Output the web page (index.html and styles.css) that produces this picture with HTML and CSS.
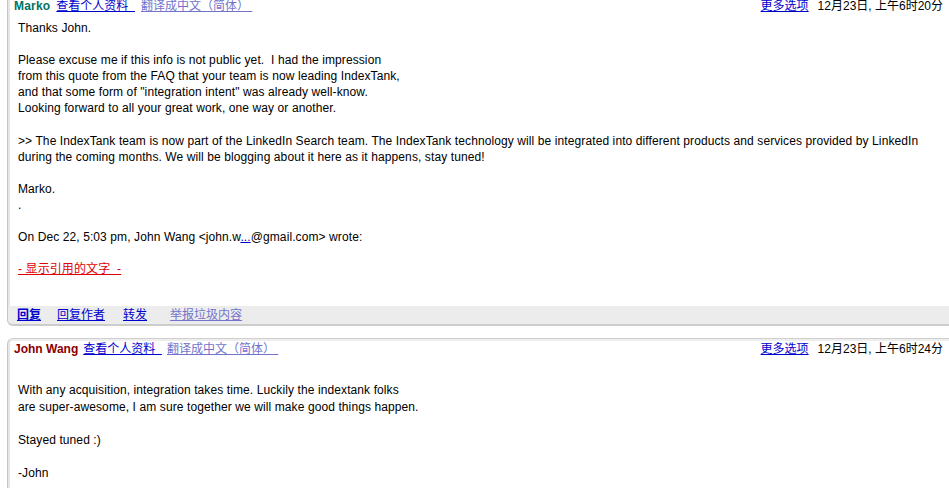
FILE: index.html
```html
<!DOCTYPE html>
<html lang="zh-CN">
<head>
<meta charset="utf-8">
<title>Thread</title>
<link rel="stylesheet" href="styles.css">
</head>
<body>
<div class="thread">
  <div class="msg msg-first">
    <div class="head">
      <div class="head-left">
        <span class="author author-marko">Marko</span>
        <a class="lnk" href="#">查看个人资料&nbsp;&nbsp;</a>
        <a class="lnk lnk-light" href="#">翻译成中文（简体）&nbsp;</a>
      </div>
      <div class="head-right">
        <a class="lnk" href="#">更多选项</a>
        <span class="date">12月23日, 上午6时20分</span>
      </div>
    </div>
    <div class="body body-first">
      Thanks John.<br>
      <br>
      Please excuse me if this info is not public yet.&nbsp; I had the impression<br>
      from this quote from the FAQ that your team is now leading IndexTank,<br>
      and that some form of "integration intent" was already well-know.<br>
      Looking forward to all your great work, one way or another.<br>
      <br>
      &gt;&gt; The IndexTank team is now part of the LinkedIn Search team. The IndexTank technology will be integrated into different products and services provided by LinkedIn<br>
      during the coming months. We will be blogging about it here as it happens, stay tuned!<br>
      <br>
      Marko.<br>
      .<br>
      <br>
      On Dec 22, 5:03 pm, John Wang &lt;john.w<a class="lnk" href="#">...</a>@gmail.com&gt; wrote:<br>
      <br>
      <a class="lnk lnk-red" href="#">- 显示引用的文字&nbsp; -</a>
    </div>
    <div class="foot">
      <a class="lnk lnk-bold" href="#">回复</a>
      <a class="lnk" href="#">回复作者</a>
      <a class="lnk foot-fwd" href="#">转发</a>
      <a class="lnk lnk-light foot-spam" href="#">举报垃圾内容</a>
    </div>
  </div>

  <div class="msg msg-second">
    <div class="head">
      <div class="head-left">
        <span class="author author-john">John Wang</span>
        <a class="lnk" href="#">查看个人资料&nbsp;&nbsp;</a>
        <a class="lnk lnk-light" href="#">翻译成中文（简体）&nbsp;</a>
      </div>
      <div class="head-right">
        <a class="lnk" href="#">更多选项</a>
        <span class="date">12月23日, 上午6时24分</span>
      </div>
    </div>
    <div class="body body-second">
      <br>
      With any acquisition, integration takes time. Luckily the indextank folks<br>
      are super-awesome, I am sure together we will make good things happen.<br>
      <br>
      Stayed tuned :)<br>
      <br>
      -John<br>
      <br>
      <br>
    </div>
  </div>
</div>
</body>
</html>
```

FILE: styles.css
```css
html, body {
  margin: 0;
  padding: 0;
  background: #fff;
}

body {
  font-family: "Liberation Sans", Arial, "Noto Sans CJK SC", sans-serif;
  font-size: 12px;
  color: #000;
  overflow: hidden;
  height: 488px;
}

.thread {
  padding-left: 7px;
}

.msg {
  background: #fff;
  border-left: 1px solid #c4c4c4;
  box-shadow: inset 2px 0 0 #e6e6e6;
}

.msg-first {
  border-bottom: 2px solid #cccccc;
  border-bottom-left-radius: 6px;
}

.msg-second {
  margin-top: 12px;
  border-top: 1px solid #cfcfcf;
  border-top-left-radius: 6px;
  box-shadow: inset 2px 0 0 #e6e6e6, inset 0 2px 0 #eeeeee;
}

.head {
  display: flex;
  justify-content: space-between;
  align-items: center;
  padding: 0 6px 0 6px;
  line-height: 13px;
  white-space: nowrap;
}

.msg-second .head {
  padding-top: 3px;
  line-height: 14px;
}

.head-left {
  display: flex;
  align-items: center;
  gap: 6px;
}

.msg-second .head-left {
  gap: 5px;
}

.head-right {
  display: flex;
  align-items: center;
  gap: 9px;
}

.author {
  font-weight: bold;
}

.author-marko {
  color: #00735f;
  letter-spacing: 0.2px;
}

.author-john {
  color: #8b0000;
}

.lnk {
  color: #0000cc;
  text-decoration: underline;
  font-family: "Liberation Sans", Arial, "Noto Sans CJK SC", sans-serif;
}

.lnk-light {
  color: #7373cc;
}

.lnk-red {
  color: #e00000;
}

.lnk-bold {
  font-weight: bold;
}

.date {
  color: #000;
}

.body {
  padding: 7px 10px 28px 10px;
  line-height: 16.1px;
  letter-spacing: 0.1px;
  white-space: nowrap;
}

.body-second {
  padding-top: 10px;
  line-height: 16.6px;
}

.foot {
  display: flex;
  align-items: center;
  gap: 16px;
  height: 18px;
  padding-left: 9px;
  background: #ececec;
  border-bottom-left-radius: 5px;
  line-height: 18px;
}

.foot-fwd {
  margin-left: 2px;
}

.foot-spam {
  margin-left: 7px;
}
```
